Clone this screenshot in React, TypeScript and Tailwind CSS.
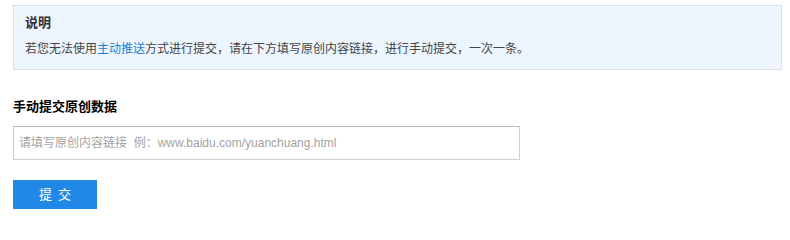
export default function App() {
  return (
    <div
      className="w-[790px] h-[220px] bg-white pl-[13px] pr-[8px] pt-[5px] text-[12px] text-[#333]"
      style={{ fontFamily: '"Liberation Sans", "Noto Sans CJK SC", sans-serif' }}
    >
      <div className="h-[65px] border border-[#d5e3ee] bg-[#edf6fe] pl-[11px] pt-[9px]">
        <div className="text-[13px] font-bold leading-[16px] text-[#333]">说明</div>
        <div className="mt-[10px] leading-[16px] text-[#444]">
          若您无法使用<span className="text-[#1a7fd6]">主动推送</span>
          方式进行提交，请在下方填写原创内容链接，进行手动提交，一次一条。
        </div>
      </div>

      <div className="mt-[29px] text-[13px] font-bold leading-[16px] text-black">手动提交原创数据</div>

      <input
        type="text"
        placeholder="请填写原创内容链接  例：www.baidu.com/yuanchuang.html"
        className="mt-[11px] block h-[34px] w-[507px] border border-[#cfcfcf] border-t-[#b9b9b9] px-[5px] text-[12px] placeholder:text-[#a3a3a3] outline-none"
      />

      <button className="mt-[20px] block h-[29px] w-[84px] bg-[#2288e8] text-[13px] tracking-[6px] text-white pl-[6px]">
        提交
      </button>
    </div>
  );
}
